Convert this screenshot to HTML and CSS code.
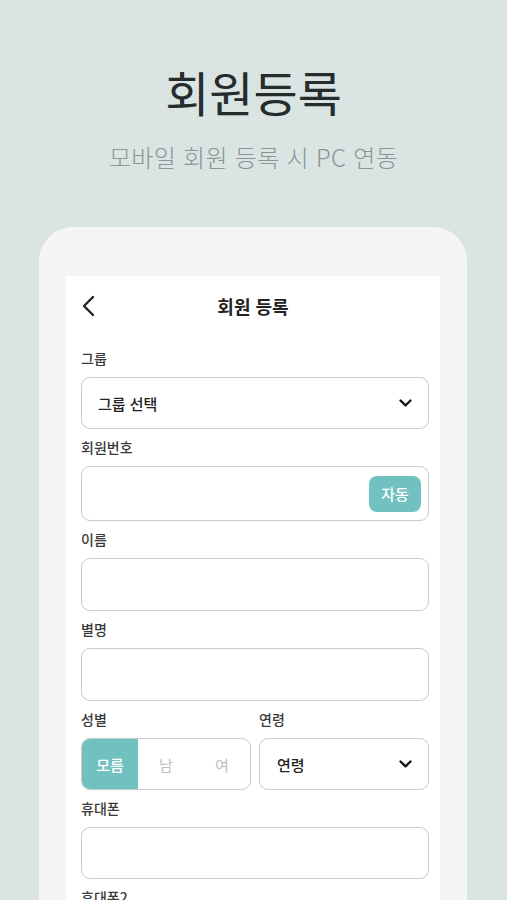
FILE: index.html
```
<!DOCTYPE html>
<html lang="ko">
  <head>
    <meta charset="UTF-8" />
    <meta name="viewport" content="width=device-width, initial-scale=1.0" />
    <title>회원등록</title>
    <link rel="stylesheet" href="styles.css">
  </head>
  <body>
    <div class="page">
      <header class="hero">
        <h1>회원등록</h1>
        <p>모바일 회원 등록 시 PC 연동</p>
      </header>

      <div class="device">
        <div class="screen">
          <div class="appbar">
            <svg class="back" width="14" height="22" viewBox="0 0 14 22">
              <path d="M12 2 L3 11 L12 20" fill="none" stroke="#222" stroke-width="2.4" stroke-linecap="round" stroke-linejoin="round" />
            </svg>
            <h2>회원 등록</h2>
          </div>

          <form class="form">
            <div class="field">
              <label>그룹</label>
              <div class="box select h52">
                <span>그룹 선택</span>
                <svg width="13" height="8" viewBox="0 0 13 8">
                  <path d="M1.5 1.5 L6.5 6.3 L11.5 1.5" fill="none" stroke="#111" stroke-width="2.3" stroke-linecap="round" stroke-linejoin="round" />
                </svg>
              </div>
            </div>

            <div class="field">
              <label>회원번호</label>
              <div class="box with-btn h55">
                <button type="button" class="auto">자동</button>
              </div>
            </div>

            <div class="field">
              <label>이름</label>
              <div class="box h53"></div>
            </div>

            <div class="field">
              <label>별명</label>
              <div class="box h53"></div>
            </div>

            <div class="field row">
              <div class="col">
                <label>성별</label>
                <div class="box segment h52">
                  <span class="seg active">모름</span>
                  <span class="seg">남</span>
                  <span class="seg">여</span>
                </div>
              </div>
              <div class="col">
                <label>연령</label>
                <div class="box select age h52">
                  <span>연령</span>
                  <svg width="13" height="8" viewBox="0 0 13 8">
                    <path d="M1.5 1.5 L6.5 6.3 L11.5 1.5" fill="none" stroke="#111" stroke-width="2.3" stroke-linecap="round" stroke-linejoin="round" />
                  </svg>
                </div>
              </div>
            </div>

            <div class="field">
              <label>휴대폰</label>
              <div class="box h52"></div>
            </div>

            <div class="field">
              <label>휴대폰2</label>
              <div class="box h52"></div>
            </div>
          </form>
        </div>
      </div>
    </div>
  </body>
</html>
```

FILE: styles.css
```
body {
  margin: 0;
  padding: 0;
  font-family: "Noto Sans CJK KR", "Noto Sans", sans-serif;
  background-color: #d9e4e3;
  height: 900px;
  overflow: hidden;
}
.page {
  width: 507px;
  height: 900px;
  overflow: hidden;
}
.hero {
  text-align: center;
  padding-top: 63px;
}
.hero h1 {
  margin: 0;
  font-size: 48px;
  line-height: 56px;
  font-weight: 400;
  color: #262b2b;
}
.hero p {
  margin: 23px 0 0;
  font-size: 24px;
  line-height: 30px;
  font-weight: 300;
  color: #8a9595;
  letter-spacing: 0.3px;
}
.device {
  margin: 55px 0 0 39px;
  width: 428px;
  height: 800px;
  box-sizing: border-box;
  padding: 49px 27px 0 27px;
  background-color: #f5f5f5;
  border-radius: 34px;
}
.screen {
  background-color: #fff;
  height: 100%;
}
.appbar {
  position: relative;
  height: 60px;
  display: flex;
  align-items: center;
  justify-content: center;
}
.appbar .back {
  position: absolute;
  left: 15px;
  top: 19px;
}
.appbar h2 {
  margin: 0;
  font-size: 18px;
  font-weight: 700;
  color: #222;
}
.form {
  padding: 12px 11px 0 15px;
}
.field {
  margin-bottom: 8px;
}
.field label {
  display: block;
  font-size: 14px;
  line-height: 20px;
  font-weight: 500;
  color: #3a3a3a;
  margin-bottom: 9px;
}
.row {
  display: flex;
  gap: 8px;
}
.col {
  flex: 1;
}
.box {
  box-sizing: border-box;
  border: 1px solid #cacaca;
  border-radius: 9px;
  background-color: #fff;
}
.h52 { height: 52px; }
.h53 { height: 53px; }
.h55 { height: 55px; }
.select {
  display: flex;
  align-items: center;
  justify-content: space-between;
  padding: 0 16px 0 16px;
  font-size: 15px;
  font-weight: 500;
  color: #222;
}
.select.age {
  padding-left: 17px;
}
.with-btn {
  display: flex;
  align-items: center;
  justify-content: flex-end;
  padding-right: 7px;
}
.auto {
  width: 52px;
  height: 36px;
  border: none;
  border-radius: 8px;
  background-color: #71c1c0;
  color: #fff;
  font-family: inherit;
  font-size: 15px;
  font-weight: 500;
  padding: 0;
}
.segment {
  display: flex;
  overflow: hidden;
}
.seg {
  flex: 1;
  display: flex;
  align-items: center;
  justify-content: center;
  font-size: 15px;
  color: #bdbdbd;
}
.seg.active {
  background-color: #71c1c0;
  color: #fff;
  font-weight: 500;
}
```
